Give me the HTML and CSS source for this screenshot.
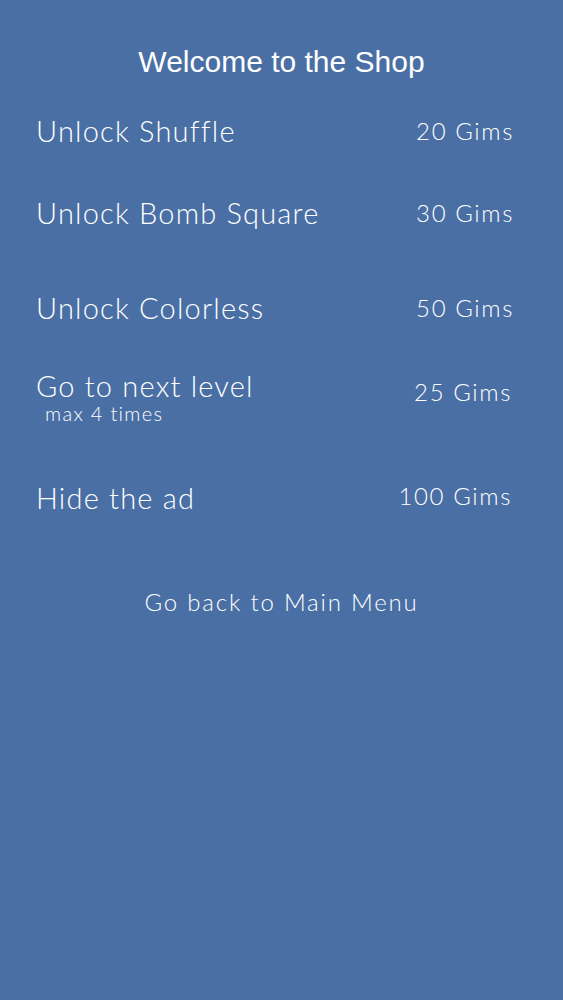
FILE: index.html
```html
<!DOCTYPE html>
<html lang="en">
<head>
  <meta charset="UTF-8" />
  <meta name="viewport" content="width=device-width, initial-scale=1.0"/>
  <title>Shop</title>
  <link rel="stylesheet" href="styles.css">
</head>
<body>
  <h2 class="title">Welcome to the Shop</h2>

  <ul class="shop">
    <li class="item item-1">
      <span class="name">Unlock Shuffle</span>
      <span class="price">20 Gims</span>
    </li>
    <li class="item item-2">
      <span class="name">Unlock Bomb Square</span>
      <span class="price">30 Gims</span>
    </li>
    <li class="item item-3">
      <span class="name">Unlock Colorless</span>
      <span class="price">50 Gims</span>
    </li>
    <li class="item item-4">
      <div>
        <span class="name">Go to next level</span>
        <div class="note">max 4 times</div>
      </div>
      <span class="price">25 Gims</span>
    </li>
    <li class="item item-5">
      <span class="name">Hide the ad</span>
      <span class="price">100 Gims</span>
    </li>
  </ul>

  <div class="back">Go back to Main Menu</div>
</body>
</html>
```

FILE: styles.css
```css
body {
  margin: 0;
  background: #4a6fa5;
  color: #fff;
  font-family: Lato, "Open Sans", sans-serif;
  font-weight: 300;
  min-height: 1000px;
}
.title {
  margin: 45px 0 0;
  font-family: "Liberation Sans", Arial, sans-serif;
  font-weight: normal;
  font-size: 30px;
  line-height: 34px;
  text-align: center;
}
.shop {
  list-style: none;
  margin: 0;
  padding: 0 49px 0 36px;
}
.item {
  display: flex;
  justify-content: space-between;
  align-items: center;
}
.name {
  font-size: 29px;
  line-height: 34px;
  letter-spacing: 1.2px;
}
.price {
  font-size: 24px;
  line-height: 30px;
  letter-spacing: 1.6px;
}
.note {
  font-size: 20px;
  line-height: 20px;
  margin-left: 9px;
  letter-spacing: 1.3px;
}
.item-1 { margin-top: 35px; }
.item-2 { margin-top: 48px; }
.item-3 { margin-top: 61px; }
.item-4 { margin-top: 44px; }
.item-5 { margin-top: 58px; }
.item-4 .price { margin-top: -8px; margin-right: 2px; }
.item-5 .price { margin-top: -4px; margin-right: 2px; }
.back {
  margin-top: 72px;
  font-size: 24px;
  line-height: 30px;
  letter-spacing: 1.8px;
  text-align: center;
}
```
